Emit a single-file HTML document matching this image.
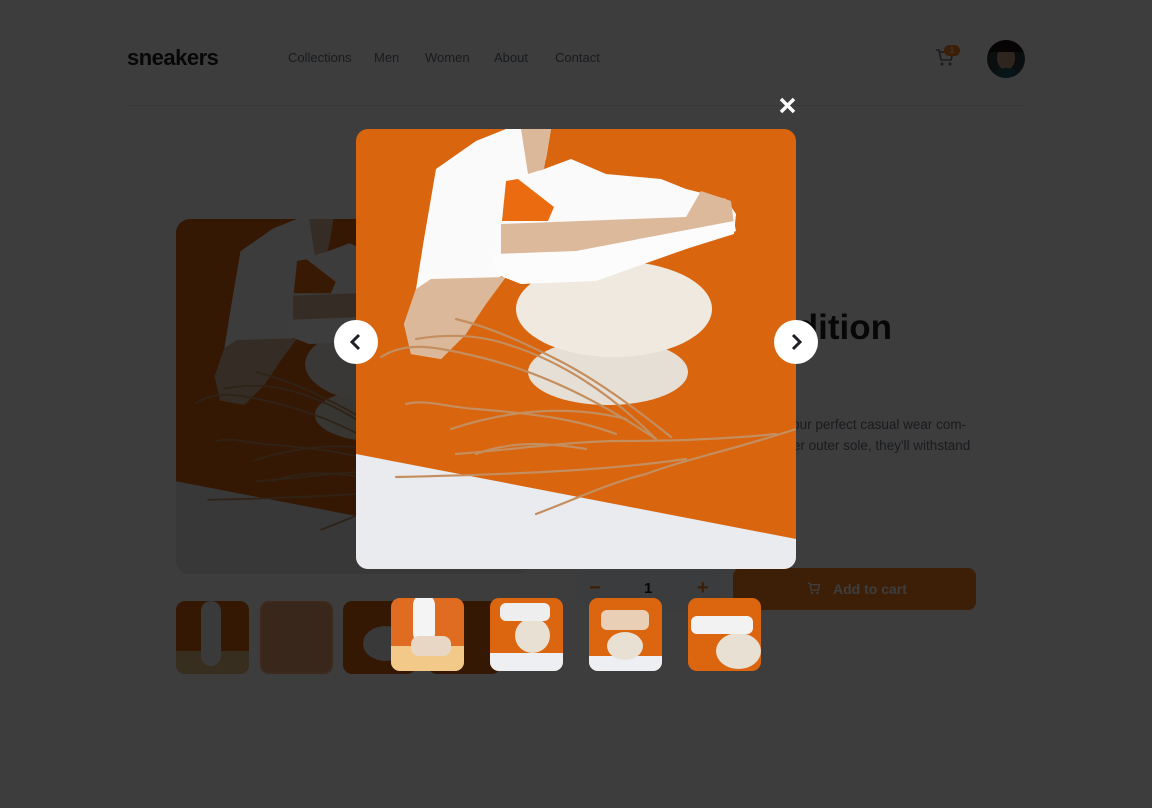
<!DOCTYPE html>
<html><head><meta charset="utf-8"><style>
*{margin:0;padding:0;box-sizing:border-box}
body{width:1152px;height:808px;overflow:hidden;background:#fff;font-family:"Liberation Sans",sans-serif;position:relative}
.a{position:absolute}
.nav span{position:absolute;top:50px;font-size:13px;color:#69707d}
.ov{position:absolute;left:0;top:0;width:1152px;height:808px;background:rgba(0,0,0,.76)}
.th{position:absolute;width:73px;height:73px;border-radius:9px;overflow:hidden}
</style></head><body>
<svg width="0" height="0" style="position:absolute">
<defs>
<symbol id="scene" viewBox="0 0 440 440">
<rect width="440" height="440" fill="#d9650f"/>
<polygon points="0,325 440,410 440,440 0,440" fill="#e9ebef"/>
<ellipse cx="252" cy="243" rx="80" ry="33" fill="#e6dfd6"/>
<ellipse cx="258" cy="180" rx="98" ry="48" fill="#efe9e0"/>
<polygon points="80,40 120,12 150,0 195,0 190,30 175,60 150,140 125,175 110,205 85,230 55,225 48,195 60,160 68,110" fill="#fafafa"/>
<polygon points="48,195 60,160 75,150 150,148 130,175 110,205 85,230 55,225" fill="#dcb89a"/>
<polygon points="165,0 195,0 188,40 172,45" fill="#dcb89a"/>
<polygon points="148,55 215,30 250,45 305,50 330,60 370,70 380,85 378,105 330,120 240,150 165,155 140,145 138,125 145,95" fill="#fafafa"/>
<polygon points="145,95 330,88 345,62 375,72 378,95 340,100 220,125 145,128" fill="#ddb99b"/>
<polygon points="138,125 220,122 378,92 380,102 330,120 240,152 165,155 140,145" fill="#fcfcfc"/>
<polygon points="150,52 162,50 198,78 192,92 146,92" fill="#ea6b10"/>
<g stroke="#c48e5e" stroke-width="2.2" fill="none" stroke-linecap="round">
<path d="M440,300 C380,320 330,330 290,345 C250,355 220,370 180,385"/>
<path d="M420,305 C370,310 320,312 265,312 C220,312 160,320 100,325"/>
<path d="M330,330 C260,340 180,345 40,348"/>
<path d="M300,310 C240,270 180,240 110,225 C80,218 50,212 25,228"/>
<path d="M300,310 C250,260 200,230 150,215 C120,205 90,205 60,210"/>
<path d="M260,305 C220,290 180,285 120,280 C90,278 70,270 50,275"/>
<path d="M315,308 C280,280 240,250 200,230 C170,215 140,200 100,190"/>
<path d="M270,290 C230,280 170,275 95,300"/>
<path d="M230,320 C200,315 160,310 120,325"/>
</g>
</symbol>
</defs></svg>

<div class="a" style="left:127px;top:45px;font-size:22px;font-weight:bold;color:#1d2025;letter-spacing:-0.5px">sneakers</div>
<div class="nav">
<span style="left:288px">Collections</span><span style="left:374px">Men</span><span style="left:425px">Women</span><span style="left:494px">About</span><span style="left:555px">Contact</span>
</div>
<svg class="a" style="left:935px;top:48px" width="20" height="19" viewBox="0 0 20 19"><path d="M1,2 H4 L6,12 H16 L18,4 H5" fill="none" stroke="#69707d" stroke-width="1.6"/><circle cx="7" cy="16" r="1.5" fill="#69707d"/><circle cx="15" cy="16" r="1.5" fill="#69707d"/></svg>
<div class="a" style="left:944px;top:45px;width:16px;height:11px;border-radius:6px;background:#ff7e1b;color:#fff;font-size:8px;text-align:center;line-height:11px">1</div>
<div class="a" style="left:987px;top:40px;width:38px;height:38px;border-radius:50%;background:#2c3a40;overflow:hidden"><div class="a" style="left:10px;top:6px;width:18px;height:24px;border-radius:50%;background:#c99b7c"></div><div class="a" style="left:0;top:0;width:38px;height:12px;background:#1b1411"></div><div class="a" style="left:6px;top:28px;width:26px;height:14px;border-radius:50%;background:#1f5a66"></div></div>
<div class="a" style="left:127px;top:105px;width:898px;height:1px;background:#e4e9f2"></div>

<svg class="a" style="left:176px;top:219px;border-radius:14px" width="355" height="355"><use href="#scene" width="355" height="355"/></svg>
<div class="th" style="left:176px;top:601px;background:#d9650f"><div class="a" style="left:0;top:50px;width:73px;height:23px;background:#e9c080"></div><div class="a" style="left:25px;top:0;width:20px;height:65px;background:#f2f2f2;border-radius:10px"></div></div>
<div class="th" style="left:260px;top:601px;background:#d9650f;border:2px solid #ff7e1b;opacity:.6"></div>
<div class="th" style="left:343px;top:601px;background:#d9650f"><div class="a" style="left:20px;top:25px;width:45px;height:35px;border-radius:50%;background:#eee"></div></div>
<div class="th" style="left:428px;top:601px;background:#d9650f"></div>

<div class="a" style="right:260px;top:306px;font-size:35px;font-weight:bold;color:#1d2025;line-height:44px;text-align:right;white-space:nowrap">Fall Limited Edition</div>
<div class="a" style="left:597px;top:414px;font-size:13.5px;color:#69707d;line-height:21px;width:420px;white-space:nowrap">These low-profile sneakers are your perfect casual wear com-<br>panion. Featuring a durable rubber outer sole, they'll withstand<br>everything the weather can offer.</div>
<div class="a" style="left:577px;top:568px;width:143px;height:42px;background:#f6f8fd;border-radius:8px"><span class="a" style="left:12px;top:9px;color:#ff7e1b;font-size:20px;font-weight:bold">−</span><span class="a" style="left:67px;top:12px;font-size:15px;font-weight:bold;color:#1d2025">1</span><span class="a" style="left:120px;top:9px;color:#ff7e1b;font-size:20px;font-weight:bold">+</span></div>
<div class="a" style="left:733px;top:568px;width:243px;height:42px;background:#ff7e1b;border-radius:8px;color:#fff;font-size:14px;font-weight:bold;line-height:42px;padding-left:100px">Add to cart</div>
<svg class="a" style="left:807px;top:582px" width="14" height="13" viewBox="0 0 20 19"><path d="M1,2 H4 L6,12 H16 L18,4 H5" fill="none" stroke="#fff" stroke-width="2"/><circle cx="7" cy="16" r="1.8" fill="#fff"/><circle cx="15" cy="16" r="1.8" fill="#fff"/></svg>

<div class="ov"></div>

<svg class="a" style="left:779px;top:97px" width="17" height="17" viewBox="0 0 17 17"><path d="M2,2 L15,15 M15,2 L2,15" stroke="#fff" stroke-width="3.4"/></svg>
<svg class="a" style="left:356px;top:129px;border-radius:12px" width="440" height="440"><use href="#scene" width="440" height="440"/></svg>
<div class="a" style="left:334px;top:320px;width:44px;height:44px;border-radius:50%;background:#fff"></div>
<svg class="a" style="left:334px;top:320px" width="44" height="44"><path d="M25,15 L18,22 L25,29" fill="none" stroke="#1d2025" stroke-width="3"/></svg>
<div class="a" style="left:774px;top:320px;width:44px;height:44px;border-radius:50%;background:#fff"></div>
<svg class="a" style="left:774px;top:320px" width="44" height="44"><path d="M19,15 L26,22 L19,29" fill="none" stroke="#1d2025" stroke-width="3"/></svg>

<div class="th" style="left:391px;top:598px;background:#e06c22"><div class="a" style="left:0;top:48px;width:73px;height:25px;background:#f3c98a"></div><div class="a" style="left:22px;top:-4px;width:22px;height:50px;background:#f4f4f4;border-radius:11px"></div><div class="a" style="left:20px;top:38px;width:40px;height:20px;background:#e8d7c4;border-radius:8px"></div></div>
<div class="th" style="left:490px;top:598px;background:#dc6510"><div class="a" style="left:0;top:55px;width:73px;height:18px;background:#eeeff2"></div><div class="a" style="left:25px;top:20px;width:35px;height:35px;border-radius:50%;background:#e9e0d4"></div><div class="a" style="left:10px;top:5px;width:50px;height:18px;background:#eee;border-radius:6px"></div></div>
<div class="th" style="left:589px;top:598px;background:#dc6510"><div class="a" style="left:0;top:58px;width:73px;height:15px;background:#eeeff2"></div><div class="a" style="left:18px;top:34px;width:36px;height:28px;border-radius:50%;background:#e9e0d4"></div><div class="a" style="left:12px;top:12px;width:48px;height:20px;background:#e9cfb6;border-radius:6px"></div></div>
<div class="th" style="left:688px;top:598px;background:#dc6510"><div class="a" style="left:28px;top:35px;width:45px;height:36px;border-radius:50%;background:#e9e0d4"></div><div class="a" style="left:3px;top:18px;width:62px;height:18px;background:#f2f2f2;border-radius:6px"></div></div>
</body></html>
